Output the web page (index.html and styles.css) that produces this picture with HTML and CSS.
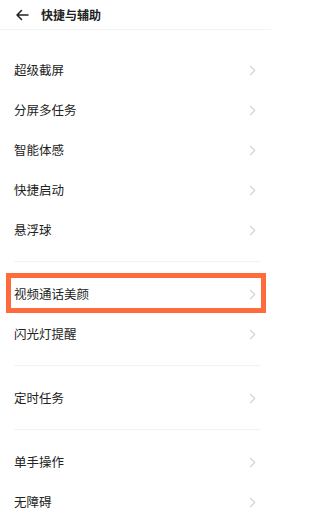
FILE: index.html
```html
<!DOCTYPE html>
<html lang="zh">
<head>
<meta charset="utf-8">
<title>快捷与辅助</title>
<link rel="stylesheet" href="styles.css">
</head>
<body>
<div class="page">
  <header class="topbar">
    <svg class="back" width="14" height="12" viewBox="0 0 14 12" aria-hidden="true">
      <path d="M13 6H2M6.5 1.5L2 6l4.5 4.5" fill="none" stroke="#222" stroke-width="1.5" stroke-linecap="round" stroke-linejoin="round"/>
    </svg>
    <h1 class="title">快捷与辅助</h1>
  </header>

  <section class="group group-first">
    <div class="row"><span class="label">超级截屏</span><span class="chev"></span></div>
    <div class="row"><span class="label">分屏多任务</span><span class="chev"></span></div>
    <div class="row"><span class="label">智能体感</span><span class="chev"></span></div>
    <div class="row"><span class="label">快捷启动</span><span class="chev"></span></div>
    <div class="row"><span class="label">悬浮球</span><span class="chev"></span></div>
  </section>
  <div class="divider"></div>
  <section class="group">
    <div class="row highlight"><span class="label">视频通话美颜</span><span class="chev"></span></div>
    <div class="row"><span class="label">闪光灯提醒</span><span class="chev"></span></div>
  </section>
  <div class="divider"></div>
  <section class="group">
    <div class="row"><span class="label">定时任务</span><span class="chev"></span></div>
  </section>
  <div class="divider"></div>
  <section class="group">
    <div class="row"><span class="label">单手操作</span><span class="chev"></span></div>
    <div class="row"><span class="label">无障碍</span><span class="chev"></span></div>
  </section>
</div>
</body>
</html>
```

FILE: styles.css
```css
html, body {
  margin: 0;
  padding: 0;
  background: #ffffff;
}
body {
  font-family: "Noto Sans CJK SC", "Noto Sans", sans-serif;
  color: #222222;
  overflow: hidden;
}
.page {
  width: 271px;
}
.topbar {
  height: 29px;
  display: flex;
  align-items: center;
  padding-left: 15px;
  border-bottom: 1px solid #f3f3f3;
}
.back {
  display: block;
  margin-right: 12px;
}
.title {
  margin: 0;
  font-size: 12px;
  font-weight: 700;
  line-height: 1;
  color: #222222;
}
.group-first {
  margin-top: 20px;
}
.row {
  position: relative;
  height: 40px;
  display: flex;
  align-items: center;
  justify-content: space-between;
  padding: 0 15px 0 14px;
}
.label {
  font-size: 12.5px;
  line-height: 1;
  color: #222222;
}
.chev {
  width: 6px;
  height: 6px;
  border-top: 1.2px solid #cccccc;
  border-right: 1.2px solid #cccccc;
  transform: rotate(45deg);
  margin-right: 2px;
}
.divider {
  height: 1px;
  background: #f2f2f2;
  margin: 11px 11px 12px 14px;
}
.highlight::after {
  content: "";
  position: absolute;
  top: -1px;
  bottom: 1px;
  left: 6px;
  right: 5px;
  border: 5px solid #ff6b3a;
}
```
